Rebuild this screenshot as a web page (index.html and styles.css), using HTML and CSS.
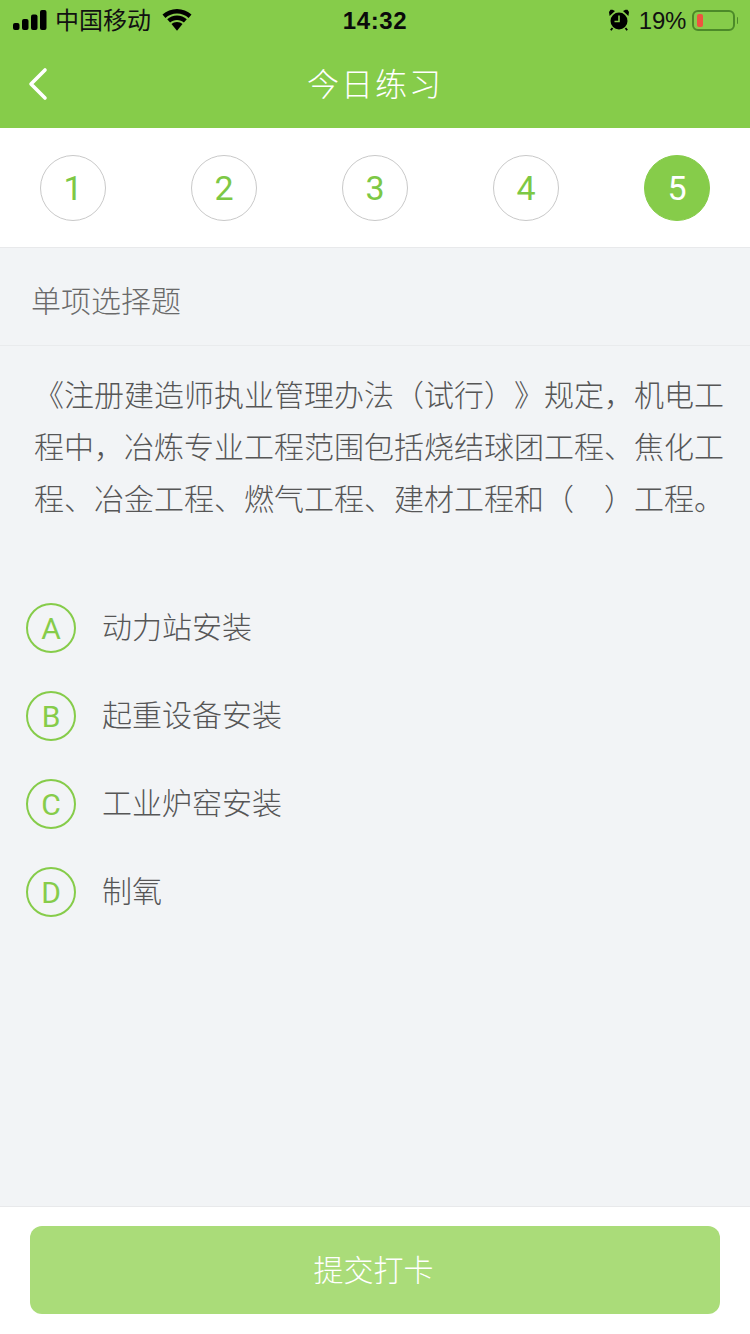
FILE: index.html
```html
<!DOCTYPE html>
<html lang="zh-CN">
<head>
<meta charset="utf-8">
<title>今日练习</title>
<link rel="stylesheet" href="styles.css">
</head>
<body>
<div class="page">
  <header class="top">
    <div class="status">
      <div class="status-left">
        <svg class="signal" width="34" height="20" viewBox="0 0 34 20"><rect x="0" y="13" width="6.500" height="7" rx="2"/><rect x="9" y="9" width="6.500" height="11" rx="2"/><rect x="18" y="4.500" width="6.500" height="15.500" rx="2"/><rect x="27" y="0" width="6.500" height="20" rx="2"/></svg>
        <span class="carrier">中国移动</span>
        <svg class="wifi" width="30" height="22" viewBox="0 0 30 22"><path d="M15 4.500c4.400 0 8.500 1.700 11.600 4.500l2.900-3.400C25.600 2.200 20.500 0 15 0S4.400 2.200.5 5.600L3.400 9C6.500 6.200 10.600 4.500 15 4.500z"/><path d="M15 11c2.700 0 5.100 1 6.900 2.600l2.900-3.400C22.200 7.900 18.700 6.500 15 6.500S7.800 7.900 5.200 10.200l2.900 3.400C9.900 12 12.300 11 15 11z"/><path d="M15 13c-2.200 0-4.100.8-5.500 2.100L15 21.800l5.500-6.700C19.100 13.800 17.200 13 15 13z"/></svg>
      </div>
      <span class="time">14:32</span>
      <div class="status-right">
        <svg class="alarm" width="20" height="22" viewBox="0 0 20 22"><circle cx="10" cy="12" r="8.500"/><path d="M.6 7 6 2 3.500.8 1.500.8 0 3z M19.400 7 14 2 16.500.8 18.500.8 20 3z"/><path d="M3.500 19 1.800 21.200M16.500 19 18.200 21.200" stroke="#000" stroke-width="1.800"/><path d="M10 6.500V12.500H5.500" fill="none" stroke="#86cd4a" stroke-width="1.600"/></svg>
        <span class="percent">19%</span>
        <div class="battery"><div class="battery-level"></div></div>
        <div class="battery-cap"></div>
      </div>
    </div>
    <div class="nav">
      <svg class="back" width="22" height="34" viewBox="0 0 22 34"><path d="M18 3 4 17l14 14" fill="none" stroke="#fff" stroke-width="3.600" stroke-linecap="round" stroke-linejoin="round"/></svg>
      <h1 class="title">今日练习</h1>
    </div>
  </header>

  <nav class="steps">
    <span class="step">1</span>
    <span class="step">2</span>
    <span class="step">3</span>
    <span class="step">4</span>
    <span class="step step-active">5</span>
  </nav>

  <main class="content">
    <div class="qtype">单项选择题</div>
    <p class="question">《注册建造师执业管理办法（试行）》规定，机电工程中，冶炼专业工程范围包括烧结球团工程、焦化工程、冶金工程、燃气工程、建材工程和（&#12288;）工程。</p>
    <ul class="options">
      <li class="option"><span class="badge">A</span><span class="option-text">动力站安装</span></li>
      <li class="option"><span class="badge">B</span><span class="option-text">起重设备安装</span></li>
      <li class="option"><span class="badge">C</span><span class="option-text">工业炉窑安装</span></li>
      <li class="option"><span class="badge">D</span><span class="option-text">制氧</span></li>
    </ul>
  </main>

  <footer class="footer">
    <button class="submit" type="button">提交打卡</button>
  </footer>
</div>
</body>
</html>
```
FILE: styles.css
```css
* { box-sizing: border-box; }
html, body { margin: 0; padding: 0; }
body {
  width: 750px;
  height: 1334px;
  overflow: hidden;
  font-family: "Liberation Sans", "Noto Sans CJK SC", sans-serif;
  background: #f2f4f6;
  text-spacing-trim: space-all;
  font-feature-settings: "palt" 0, "chws" 0;
}
.page { display: flex; flex-direction: column; height: 1334px; }

.top { background: #86cc4a; height: 128px; flex: none; }
.status {
  height: 40px;
  display: flex;
  align-items: center;
  justify-content: space-between;
  padding: 0 12px 0 13px;
  color: #0a0a0a;
  position: relative;
}
.status-left { display: flex; align-items: center; }
.signal { fill: #000; margin-top: 0; }
.carrier { font-size: 24px; margin-left: 8px; line-height: 40px; color: #111; position: relative; top: 1px; }
.wifi { fill: #000; margin-left: 11px; margin-top: 0; }
.time {
  position: absolute;
  left: 0;
  right: 0;
  text-align: center;
  font-size: 24px;
  font-weight: 700;
  letter-spacing: 0.6px;
  margin-top: 1px;
}
.status-right { display: flex; align-items: center; }
.alarm { fill: #000; margin-right: 10px; margin-top: -1px; }
.percent { font-size: 24px; color: #111; margin-right: 6px; letter-spacing: -0.3px; position: relative; top: 1px; }
.battery {
  width: 43px;
  height: 21px;
  border: 2px solid #4c8a29;
  border-radius: 6px;
  padding: 2px 3px;
}
.battery-level { width: 6px; height: 13px; background: #ee5340; border-radius: 2px; }
.battery-cap { width: 1px; height: 7px; background: #4c8a29; margin-left: 2px; border-radius: 0 2px 2px 0; }

.nav {
  height: 88px;
  display: flex;
  align-items: center;
  justify-content: center;
  position: relative;
}
.back { position: absolute; left: 27px; top: 27px; }
.title {
  margin: 0;
  font-size: 32px;
  font-weight: 300;
  color: #fff;
  letter-spacing: 2px;
  line-height: 88px;
  position: relative;
  top: 1px;
}

.steps {
  flex: none;
  height: 120px;
  background: #fff;
  border-bottom: 1px solid #e8e9eb;
  display: flex;
  justify-content: space-between;
  align-items: flex-start;
  padding: 27px 40px 0;
}
.step {
  width: 66px;
  height: 66px;
  border: 1px solid #c9c9c9;
  border-radius: 50%;
  display: flex;
  align-items: center;
  justify-content: center;
  font-family: Roboto, sans-serif;
  font-weight: 400;
  font-size: 34px;
  color: #7dc845;
}
.step-active { background: #86cc4a; border-color: #86cc4a; color: #fff; }

.content { flex: 1; min-height: 0; }
.qtype {
  height: 98px;
  border-bottom: 1px solid #e9ebed;
  padding-left: 31px;
  font-size: 30px;
  font-weight: 300;
  line-height: 108px;
  color: #6a6a6a;
}
.question {
  margin: 0;
  padding: 24px 26px 0 34px;
  font-size: 30px;
  font-weight: 300;
  line-height: 52px;
  color: #565656;
}
.options { list-style: none; margin: 77px 0 0; padding: 0 0 0 26px; }
.option { display: flex; align-items: center; height: 50px; margin-bottom: 38px; }
.badge {
  width: 50px;
  height: 50px;
  flex: none;
  border: 2px solid #86cc4a;
  border-radius: 50%;
  display: flex;
  align-items: center;
  justify-content: center;
  font-family: Roboto, sans-serif;
  font-weight: 400;
  font-size: 30px;
  color: #86cc4a;
}
.option-text { margin-left: 26px; font-size: 30px; font-weight: 300; color: #565656; position: relative; top: -3px; }

.footer {
  flex: none;
  height: 128px;
  background: #fff;
  border-top: 1px solid #e8e9eb;
  padding: 19px 30px 0;
}
.submit {
  display: block;
  width: 690px;
  height: 88px;
  border: 0;
  border-radius: 12px;
  background: #aadc79;
  color: #fff;
  font-family: inherit;
  font-size: 30px;
  font-weight: 300;
  padding: 0 3px 4px 0;
}
```
